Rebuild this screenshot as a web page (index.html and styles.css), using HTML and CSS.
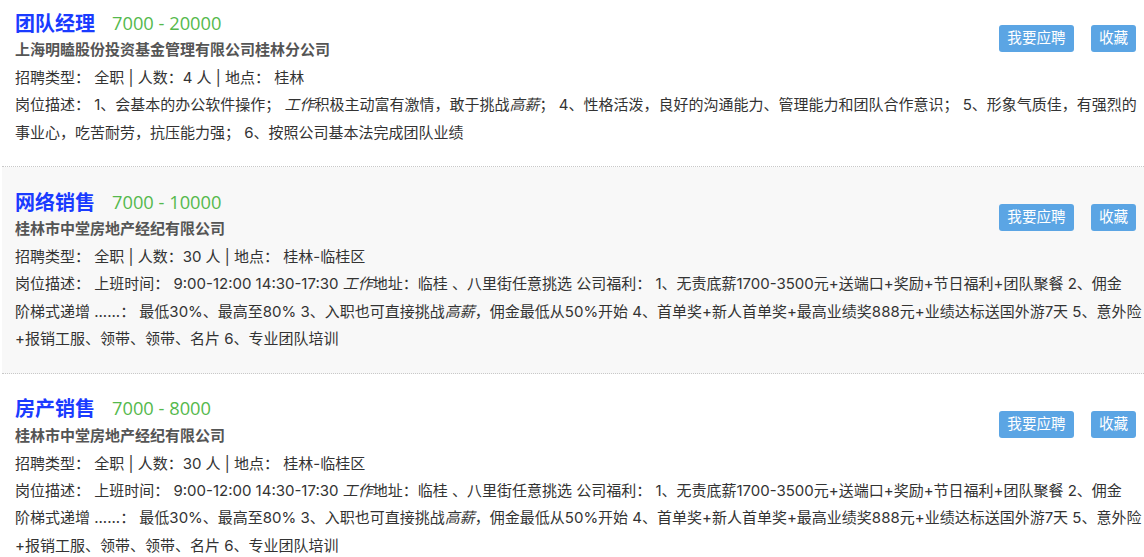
FILE: index.html
```html
<!DOCTYPE html>
<html lang="zh-CN">
<head>
<meta charset="utf-8">
<title>职位列表</title>
<link rel="stylesheet" href="styles.css">
</head>
<body>
<div class="job-list">
  <div class="job job--first">
    <div class="job-head">
      <div class="job-info">
        <div class="job-title"><span class="job-name">团队经理</span><span class="job-salary">7000 - 20000</span></div>
        <div class="job-company">上海明瞌股份投资基金管理有限公司桂林分公司</div>
        <div class="job-meta">招聘类型： 全职 | 人数：4 人 | 地点： 桂林</div>
      </div>
      <div class="job-actions">
        <span class="btn btn-apply">我要应聘</span>
        <span class="btn btn-fav">收藏</span>
      </div>
    </div>
    <div class="job-desc">岗位描述： 1、会基本的办公软件操作； <i>工作</i>积极主动富有激情，敢于挑战<i>高薪</i>； 4、性格活泼，良好的沟通能力、管理能力和团队合作意识； 5、形象气质佳，有强烈的事业心，吃苦耐劳，抗压能力强； 6、按照公司基本法完成团队业绩</div>
  </div>
  <div class="job job--alt">
    <div class="job-head">
      <div class="job-info">
        <div class="job-title"><span class="job-name">网络销售</span><span class="job-salary">7000 - 10000</span></div>
        <div class="job-company">桂林市中堂房地产经纪有限公司</div>
        <div class="job-meta">招聘类型： 全职 | 人数：30 人 | 地点： 桂林-临桂区</div>
      </div>
      <div class="job-actions">
        <span class="btn btn-apply">我要应聘</span>
        <span class="btn btn-fav">收藏</span>
      </div>
    </div>
    <div class="job-desc">岗位描述： 上班时间： 9:00-12:00 14:30-17:30 <i>工作</i>地址：临桂 、八里街任意挑选 公司福利： 1、无责底薪1700-3500元+送端口+奖励+节日福利+团队聚餐 2、佣金<br>阶梯式递增 ......： 最低30%、最高至80% 3、入职也可直接挑战<i>高薪</i>，佣金最低从50%开始 4、首单奖+新人首单奖+最高业绩奖888元+业绩达标送国外游7天 5、意外险+报销工服、领带、领带、名片 6、专业团队培训</div>
  </div>
  <div class="job">
    <div class="job-head">
      <div class="job-info">
        <div class="job-title"><span class="job-name">房产销售</span><span class="job-salary">7000 - 8000</span></div>
        <div class="job-company">桂林市中堂房地产经纪有限公司</div>
        <div class="job-meta">招聘类型： 全职 | 人数：30 人 | 地点： 桂林-临桂区</div>
      </div>
      <div class="job-actions">
        <span class="btn btn-apply">我要应聘</span>
        <span class="btn btn-fav">收藏</span>
      </div>
    </div>
    <div class="job-desc">岗位描述： 上班时间： 9:00-12:00 14:30-17:30 <i>工作</i>地址：临桂 、八里街任意挑选 公司福利： 1、无责底薪1700-3500元+送端口+奖励+节日福利+团队聚餐 2、佣金<br>阶梯式递增 ......： 最低30%、最高至80% 3、入职也可直接挑战<i>高薪</i>，佣金最低从50%开始 4、首单奖+新人首单奖+最高业绩奖888元+业绩达标送国外游7天 5、意外险+报销工服、领带、领带、名片 6、专业团队培训</div>
  </div>
</div>
</body>
</html>
```
FILE: styles.css
```css
html, body {
  margin: 0;
  padding: 0;
  background: #fff;
}
body {
  font-family: Inter, "Noto Sans CJK SC", sans-serif;
  color: #333;
  font-size: 15px;
  overflow: hidden;
}
.job-list {
  padding-left: 2px;
}
.job {
  padding: 20px 0 20px 13px;
  border-bottom: 1px dotted #c8c8c8;
}
.job--first {
  padding-top: 8px;
}
.job--alt {
  background: #f8f8f8;
}
.job-head {
  display: flex;
  justify-content: space-between;
  align-items: flex-start;
}
.job-title {
  height: 28px;
  display: flex;
  align-items: center;
}
.job-name {
  font-size: 20px;
  font-weight: bold;
  color: #1a3bff;
}
.job-salary {
  font-family: "Open Sans", "Noto Sans CJK SC", sans-serif;
  font-size: 18.3px;
  color: #55b94d;
  margin-left: 17px;
}
.job-company {
  font-size: 15px;
  font-weight: bold;
  color: #555;
  line-height: 28px;
}
.job-meta {
  line-height: 27px;
}
.job-desc {
  line-height: 27.5px;
}
.job-desc i {
  font-style: italic;
}
.job-actions {
  display: flex;
  gap: 17px;
  margin-top: 17px;
  margin-right: 8px;
}
.btn {
  display: inline-block;
  height: 27px;
  line-height: 27px;
  text-align: center;
  background: #5ba5e4;
  color: #fff;
  font-size: 14.6px;
  border-radius: 3px;
}
.btn-apply {
  width: 75px;
}
.btn-fav {
  width: 45px;
}
```
